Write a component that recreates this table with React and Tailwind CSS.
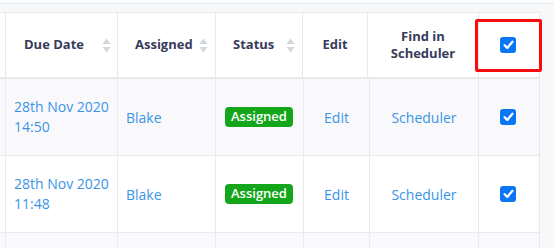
import React from "react";

// sort arrows shown beside sortable headers
const SortIcon = () => (
  <svg width="9" height="15" viewBox="0 0 9 15" className="shrink-0">
    <path d="M4.5 0.5 L8.5 6 L0.5 6 Z" fill="#d3d6dc" />
    <path d="M4.5 14.5 L8.5 9 L0.5 9 Z" fill="#d3d6dc" />
  </svg>
);

const Check = () => (
  <div className="w-4 h-4 rounded-[3px] bg-[#0a75f5] flex items-center justify-center">
    <svg width="11" height="10" viewBox="0 0 11 10">
      <path d="M1.6 5.2 L4.3 7.9 L9.4 1.8" fill="none" stroke="white" strokeWidth="2.3" strokeLinecap="round" strokeLinejoin="round" />
    </svg>
  </div>
);

const rows = [
  { date: "28th Nov 2020", time: "14:50", who: "Blake", bg: "bg-[#f9f9fb]" },
  { date: "28th Nov 2020", time: "11:48", who: "Blake", bg: "bg-white" },
  { date: "", time: "", who: "", bg: "bg-[#f9f9fb]" },
];

export default function App() {
  return (
    <div
      className="relative w-[554px] h-[248px] overflow-hidden bg-[#f7f8fa]"
      style={{ fontFamily: '"Open Sans", "Liberation Sans", sans-serif' }}
    >
      <div className="h-[4px] bg-[#fafbfc] border-b border-[#e9ebef]" />
      <div className="h-[8px]" />

      <div className="w-[540px] border-t border-r border-[#e6e8ec]">
        {/* header */}
        <div className="grid grid-cols-[5px_112px_98px_87px_65px_111px_62px] h-[66px] bg-white border-b-2 border-[#e8eaee] text-[13px] font-bold text-[#373c5b]">
          <div />
          <div className="border-l border-[#e6e8ec] flex items-center justify-between pl-[18px] pr-[6px]">
            <span>Due Date</span>
            <SortIcon />
          </div>
          <div className="border-l border-[#e6e8ec] flex items-center justify-between pl-[17px] pr-[7px]">
            <span>Assigned</span>
            <SortIcon />
          </div>
          <div className="border-l border-[#e6e8ec] flex items-center justify-between pl-[17px] pr-[7px]">
            <span>Status</span>
            <SortIcon />
          </div>
          <div className="border-l border-[#e6e8ec] flex items-center justify-center">Edit</div>
          <div className="border-l border-[#e6e8ec] flex items-center justify-center text-center leading-[17px]">
            Find in
            <br />
            Scheduler
          </div>
          <div className="border-l border-[#e6e8ec] flex items-center justify-center pr-[3px]">
            <Check />
          </div>
        </div>

        {/* body */}
        {rows.map((r, i) => (
          <div
            key={i}
            className={`grid grid-cols-[5px_112px_98px_88px_66px_109px_62px] h-[77px] border-b border-[#e8eaee] text-[14px] text-[#3a94e6] ${r.bg}`}
          >
            <div />
            <div className="border-l border-[#e8eaee] flex flex-col justify-center pl-[8px] leading-[20px]">
              {r.date && (
                <>
                  <span>{r.date}</span>
                  <span>{r.time}</span>
                </>
              )}
            </div>
            <div className="border-l border-[#e8eaee] flex items-center pl-[8px]">{r.who}</div>
            <div className="border-l border-[#e8eaee] flex items-center pl-[9px]">
              {r.who && (
                <span className="h-[20px] px-[6px] rounded-[4px] bg-[#13a61b] text-white text-[13px] font-semibold flex items-center">
                  Assigned
                </span>
              )}
            </div>
            <div className="border-l border-[#e8eaee] flex items-center justify-center">{r.who && "Edit"}</div>
            <div className="border-l border-[#e8eaee] flex items-center justify-center">{r.who && "Scheduler"}</div>
            <div className="border-l border-[#e8eaee] flex items-center justify-center pr-[3px]">
              {r.who && <Check />}
            </div>
          </div>
        ))}
      </div>

      {/* highlight around the select-all checkbox */}
      <div className="absolute left-[475px] top-[19px] w-[67px] h-[53px] border-[3px] border-[#f70d0d] rounded-[2px]" />
    </div>
  );
}
